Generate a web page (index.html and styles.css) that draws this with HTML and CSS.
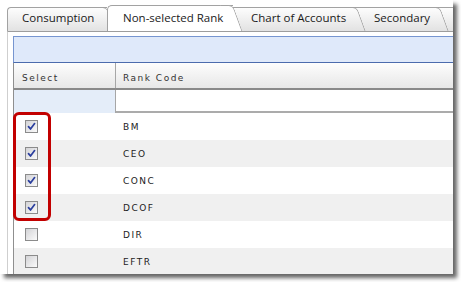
FILE: index.html
```html
<!DOCTYPE html>
<html>
<head>
<meta charset="utf-8">
<link rel="stylesheet" href="styles.css">
</head>
<body>
<div class="frame">
  <div class="tabs">
    <div class="tab tab-consumption">Consumption</div>
    <div class="tab tab-active">Non-selected Rank</div>
    <div class="tab tab-chart">Chart of Accounts</div>
    <div class="tab tab-secondary">Secondary</div>
    <div class="tab tab-more"></div>
  </div>
  <div class="panel">
    <div class="banner"></div>
    <div class="grid">
      <div class="hdr">
        <div class="hcell hcell-first">Select</div>
        <div class="hcell">Rank Code</div>
      </div>
      <div class="filter">
        <div class="fcell-first"></div>
        <div class="fcell"></div>
      </div>
      <div class="rows">
        <div class="row"><div class="sel"><span class="cb"><svg viewBox="0 0 11 11" class="tick"><polyline points="2.5,5.6 4.5,8 8.6,2.6"/></svg></span></div><div class="code">BM</div></div>
        <div class="row"><div class="sel"><span class="cb"><svg viewBox="0 0 11 11" class="tick"><polyline points="2.5,5.6 4.5,8 8.6,2.6"/></svg></span></div><div class="code">CEO</div></div>
        <div class="row"><div class="sel"><span class="cb"><svg viewBox="0 0 11 11" class="tick"><polyline points="2.5,5.6 4.5,8 8.6,2.6"/></svg></span></div><div class="code">CONC</div></div>
        <div class="row"><div class="sel"><span class="cb"><svg viewBox="0 0 11 11" class="tick"><polyline points="2.5,5.6 4.5,8 8.6,2.6"/></svg></span></div><div class="code">DCOF</div></div>
        <div class="row"><div class="sel"><span class="cb"></span></div><div class="code">DIR</div></div>
        <div class="row"><div class="sel"><span class="cb"></span></div><div class="code">EFTR</div></div>
        <div class="mark"></div>
      </div>
    </div>
  </div>
</div>
</body>
</html>
```
FILE: styles.css
```css
* { box-sizing: border-box; }
html, body { margin: 0; padding: 0; background: #fff; }
body { width: 461px; height: 282px; overflow: hidden; }

.frame {
  width: 453px;
  height: 274px;
  overflow: hidden;
  background: #fff;
  box-shadow: 4px 4px 4px rgba(0, 0, 0, 0.6);
}

/* ---------- tabs ---------- */
.tabs {
  display: flex;
  align-items: flex-end;
  height: 31px;
  padding-left: 7px;
  font-family: "Open Sans", "Noto Sans", sans-serif;
  font-size: 11.5px;
  color: #1a1a1a;
}
.tab {
  position: relative;
  flex: none;
  height: 24px;
  line-height: 20px;
  white-space: nowrap;
  background: linear-gradient(#fdfdfd, #e2e2e2);
  border-top: 1px solid #a2a2a2;
}
.tab::after {
  content: "";
  position: absolute;
  top: -1px;
  bottom: 0;
  right: 0;
  width: 12px;
  background: inherit;
  border-top: 1px solid #a2a2a2;
  border-right: 1px solid #a2a2a2;
  border-top-right-radius: 5px;
  transform-origin: top right;
  transform: skewX(20deg);
}
.tab-consumption {
  width: 100px;
  padding-left: 14px;
  border-left: 1px solid #a2a2a2;
  border-top-left-radius: 4px;
  z-index: 1;
}
.tab-active {
  width: 126px;
  height: 26px;
  padding-top: 2px;
  padding-left: 15px;
  background: #fff;
  border-left: 1px solid #a2a2a2;
  border-top-left-radius: 5px;
  z-index: 5;
}
.tab-chart { width: 124px; padding-left: 18px; z-index: 4; }
.tab-secondary { width: 83px; padding-left: 17px; z-index: 3; }
.tab-more { width: 40px; z-index: 2; }

/* ---------- panel ---------- */
.panel {
  margin-left: 7px;
  height: 243px;
  border-top: 1px solid #9d9d9d;
  border-left: 1px solid #cfcfcf;
  padding: 4px 0 0 5px;
}
.banner {
  height: 27px;
  background: #dfe9fa;
  border: 1px solid #7695d0;
  border-right: 0;
  border-bottom-color: #4b6bad;
}

.grid {
  border-left: 1px solid #8f8f8f;
  font-family: "DejaVu Sans", Verdana, sans-serif;
  font-size: 9px;
  letter-spacing: 1.5px;
  color: #222;
}
.hdr {
  display: grid;
  grid-template-columns: 102px 1fr;
  height: 27px;
  background: linear-gradient(#fdfdfd, #e7e7e7);
  border-bottom: 2px solid #898989;
}
.hcell {
  display: flex;
  align-items: center;
  padding: 4px 0 0 7px;
  color: #333;
}
.hcell-first {
  padding-left: 8px;
  border-right: 1px solid #a6a6a6;
}

.filter {
  display: grid;
  grid-template-columns: 102px 1fr;
  height: 23px;
}
.fcell-first {
  background: #e4edf9;
  border-right: 1px solid #a6a6a6;
}
.fcell {
  background: #fff;
  border-bottom: 2px solid #ababab;
}

.rows { position: relative; }
.row {
  display: grid;
  grid-template-columns: 102px 1fr;
  align-items: center;
  height: 27px;
  background: #fff;
}
.row:nth-child(even) { background: #f0f0f0; }
.sel { padding-left: 11px; display: flex; align-items: center; }
.code { padding-left: 7px; color: #1c1c1c; }

.cb {
  display: block;
  width: 13px;
  height: 13px;
  border: 1px solid #8b8b8b;
  background: linear-gradient(135deg, #d3d3d6, #fbfbfb);
}
.tick {
  display: block;
  width: 11px;
  height: 11px;
  fill: none;
  stroke: #2a3e9e;
  stroke-width: 1.7;
  stroke-linecap: round;
  stroke-linejoin: round;
}

.mark {
  position: absolute;
  left: -1px;
  top: -1px;
  width: 38px;
  height: 109px;
  border: 3px solid #c20000;
  border-radius: 6px;
}
```
